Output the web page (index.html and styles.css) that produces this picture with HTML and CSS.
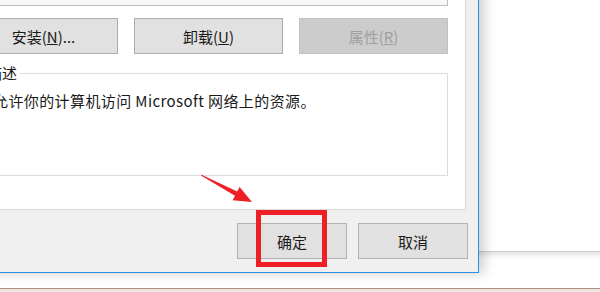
FILE: index.html
```html
<!DOCTYPE html>
<html lang="zh-CN">
<head>
  <meta charset="UTF-8">
  <title>属性</title>
  <link rel="stylesheet" href="styles.css">
</head>
<body>
  <div class="desktop">
    <div class="back-window"></div>

    <div class="dialog">
      <div class="tab-page">
        <div class="list-box"></div>
        <div class="button-row">
          <button class="win-button">安装(<u>N</u>)...</button>
          <button class="win-button">卸载(<u>U</u>)</button>
          <button class="win-button" disabled>属性(<u>R</u>)</button>
        </div>
        <div class="group">
          <span class="group-label">描述</span>
          <p class="group-text">允许你的计算机访问 Microsoft 网络上的资源。</p>
        </div>
      </div>
      <div class="dialog-footer">
        <button class="win-button footer-button">确定</button>
        <button class="win-button footer-button">取消</button>
      </div>
    </div>

    <!-- red annotation drawn over the screenshot -->
    <svg class="marks" width="600" height="288" viewBox="0 0 600 288">
      <polygon points="201,174.4 201,175.6 235,195.8 232.6,200.2 252,202 239.6,187 237.2,191.4" fill="#ee1f27"/>
      <rect x="258.5" y="212.5" width="66" height="52" fill="none" stroke="#ee1f27" stroke-width="5"/>
    </svg>
  </div>
  <div class="taskbar"></div>
</body>
</html>
```

FILE: styles.css
```css
* {
  box-sizing: border-box;
}
body {
  margin: 0;
  width: 600px;
  height: 292px;
  overflow: hidden;
  background: #fff;
  font-family: "Noto Sans CJK SC", "Noto Sans", sans-serif;
  font-size: 15px;
  color: #1a1a1a;
}
.desktop {
  position: relative;
  height: 288px;
  overflow: hidden;
  background: #fff;
}
.back-window {
  position: absolute;
  left: 300px;
  top: -20px;
  width: 400px;
  height: 272px;
  background: #fff;
  border-bottom: 1px solid #cfcfcf;
  box-shadow: 0 2px 6px rgba(0,0,0,0.15);
}
.dialog {
  position: absolute;
  left: -60px;
  top: -60px;
  width: 539px;
  height: 333px;
  padding: 9px 12px 13px 9px;
  background: #f0f0f0;
  border: 1px solid #2b8fe3;
  box-shadow: 5px 0 12px rgba(0,0,0,0.2);
  display: flex;
  flex-direction: column;
}
.tab-page {
  height: 260px;
  padding: 12px 17px 0 18px;
  background: #fff;
  border: 1px solid #dadada;
}
.list-box {
  height: 43px;
  background: #f8f8f8;
  border: 1px solid #bdbdbd;
}
.button-row {
  display: flex;
  gap: 16px;
  margin-top: 12px;
}
.win-button {
  height: 36px;
  padding: 0;
  font-family: inherit;
  font-size: 15px;
  color: #1a1a1a;
  background: #e1e1e1;
  border: 1px solid #adadad;
  border-radius: 0;
}
.button-row .win-button {
  width: 149px;
}
.win-button:disabled {
  color: #a0a0a0;
  background: #cccccc;
  border-color: #c2c2c2;
}
.group {
  position: relative;
  height: 103px;
  margin-top: 19px;
  padding: 17px 0 0 23px;
  border: 1px solid #dcdcdc;
}
.group-label {
  position: absolute;
  left: 14px;
  top: -9px;
  padding: 0 3px;
  line-height: 16px;
  background: #fff;
}
.group-text {
  margin: 0;
  line-height: 20px;
  letter-spacing: 0.4px;
  white-space: nowrap;
}
.dialog-footer {
  display: flex;
  justify-content: flex-end;
  gap: 11px;
  margin: 13px -2px 0 0;
}
.footer-button {
  width: 110px;
  border-color: #b3b3b3;
}
.marks {
  position: absolute;
  left: 0;
  top: 0;
}
.taskbar {
  height: 4px;
  background: #eee4e0;
  border-top: 1px solid #b08f80;
}
```
